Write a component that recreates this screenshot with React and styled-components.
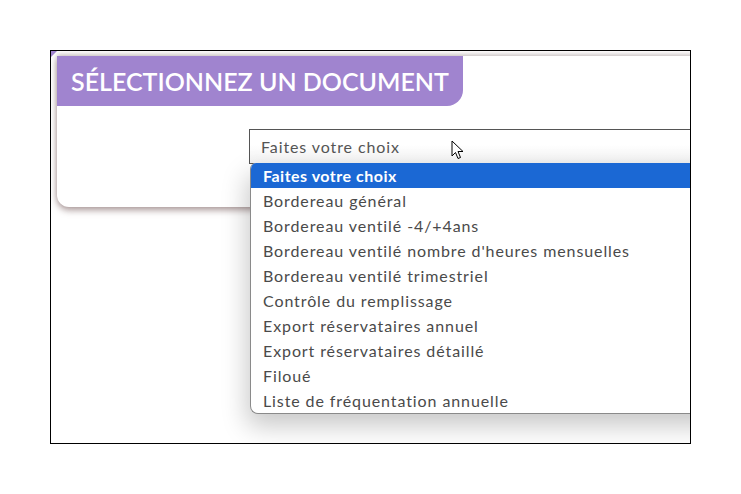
import React from 'react';
import styled, { createGlobalStyle } from 'styled-components';

const GlobalStyle = createGlobalStyle`
  html, body {
    margin: 0;
    padding: 0;
    background: #fff;
  }
  body {
    font-family: "Lato", "Liberation Sans", sans-serif;
  }
`;

const Page = styled.div`
  width: 741px;
  height: 494px;
  padding: 50px 0 0 50px;
  box-sizing: border-box;
`;

const Frame = styled.div`
  position: relative;
  width: 641px;
  height: 394px;
  box-sizing: border-box;
  border: 1px solid #000;
  overflow: hidden;
  background: #fff;
  padding: 5px 0 0 6px;
`;

const Corner = styled.div`
  position: absolute;
  top: 0;
  left: 0;
  width: 0;
  height: 0;
  border-top: 6px solid #a084cf;
  border-right: 6px solid transparent;
`;

const Card = styled.div`
  position: relative;
  width: 720px;
  height: 151px;
  background: #fff;
  border-radius: 0 0 0 12px;
  box-shadow: 0 3px 7px rgba(110, 80, 80, 0.6), 0 -2px 4px rgba(110, 90, 90, 0.25);
`;

const Heading = styled.h2`
  display: inline-flex;
  align-items: center;
  margin: 0;
  height: 50px;
  padding: 0 14px 0 14px;
  box-sizing: border-box;
  background: #a084cf;
  color: #fff;
  font-family: "Lato", "Liberation Sans", sans-serif;
  font-weight: 600;
  font-size: 25px;
  letter-spacing: 0px;
  border-radius: 0 0 16px 0;
`;

const Field = styled.div`
  position: relative;
  margin: 23px 0 0 192px;
`;

const SelectBox = styled.div`
  height: 35px;
  box-sizing: border-box;
  border: 1px solid #555;
  border-right: none;
  background: linear-gradient(#fff 0%, #fff 45%, #f2f2f2 100%);
  display: flex;
  align-items: center;
  padding-left: 11px;
  font-size: 16px;
  color: #555;
  letter-spacing: 0.9px;
`;

const Cursor = styled.svg`
  position: absolute;
  left: 202px;
  top: 11px;
`;

const List = styled.ul`
  position: absolute;
  z-index: 2;
  top: 34px;
  left: 1px;
  width: 520px;
  margin: 0;
  padding: 0;
  list-style: none;
  background: #fff;
  border: 1px solid #8a8a8a;
  border-top: none;
  border-right: none;
  border-radius: 6px 0 0 8px;
  overflow: hidden;
  box-shadow: -3px 12px 26px rgba(0, 0, 0, 0.22);
`;

const Option = styled.li`
  height: 25px;
  display: flex;
  align-items: center;
  padding-left: 12px;
  font-size: 16px;
  letter-spacing: ${p => (p.active ? '0.5px' : '0.9px')};
  color: ${p => (p.active ? '#fff' : '#4a4a4a')};
  background: ${p => (p.active ? '#1b68d4' : 'transparent')};
  font-weight: ${p => (p.active ? 700 : 400)};
`;

const options = [
  'Faites votre choix',
  'Bordereau général',
  'Bordereau ventilé -4/+4ans',
  "Bordereau ventilé nombre d'heures mensuelles",
  'Bordereau ventilé trimestriel',
  'Contrôle du remplissage',
  'Export réservataires annuel',
  'Export réservataires détaillé',
  'Filoué',
  'Liste de fréquentation annuelle',
];

const App = () => (
  <>
    <GlobalStyle />
    <Page>
      <Frame>
        <Corner />
        <Card>
          <Heading>SÉLECTIONNEZ UN DOCUMENT</Heading>
          <Field>
            <SelectBox>Faites votre choix</SelectBox>
            <Cursor width="13" height="20" viewBox="0 0 13 20">
              <path
                d="M1 1 L1 16 L4.5 12.5 L7 18.5 L9.5 17.5 L7 11.5 L12 11.5 Z"
                fill="#fff"
                stroke="#000"
                strokeWidth="1"
                strokeLinejoin="miter"
              />
            </Cursor>
            <List>
              {options.map((o, i) => (
                <Option key={o} active={i === 0}>
                  {o}
                </Option>
              ))}
            </List>
          </Field>
        </Card>
      </Frame>
    </Page>
  </>
);

export default App;
